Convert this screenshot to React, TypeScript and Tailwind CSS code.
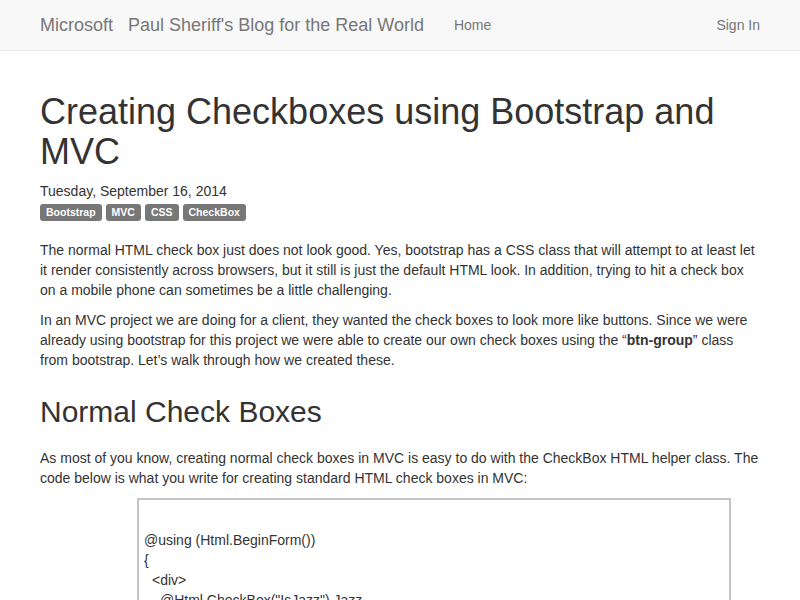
export default function App() {
  const tags = ['Bootstrap', 'MVC', 'CSS', 'CheckBox'];

  return (
    <div className="min-h-screen bg-white text-[14px] leading-[20px] text-[#333]" style={{ fontFamily: '"Liberation Sans", Arial, sans-serif' }}>
      {/* Navbar */}
      <nav className="h-[51px] border-b border-[#e7e7e7] bg-[#f8f8f8]">
        <div className="mx-auto flex h-[50px] w-[750px] items-center px-[15px]">
          <a className="text-[18px] leading-[20px] text-[#777]">Microsoft</a>
          <a className="ml-[15px] text-[18px] leading-[20px] text-[#777]">Paul Sheriff's Blog for the Real World</a>
          <a className="ml-[30px] text-[#777]">Home</a>
          <a className="ml-auto text-[#777]">Sign In</a>
        </div>
      </nav>

      <div className="mx-auto w-[750px] px-[15px] pt-[21px]">
        <h1 className="mt-[20px] mb-[10px] text-[36px] leading-[1.1] font-medium">
          Creating Checkboxes using Bootstrap and MVC
        </h1>
        <div>Tuesday, September 16, 2014</div>
        <div className="mt-[3px] flex gap-[4px]">
          {tags.map((t) => (
            <span
              key={t}
              className="flex h-[17px] items-center rounded-[3px] bg-[#777] px-[6px] pb-[1px] text-[10.5px] leading-none font-bold text-white"
            >
              {t}
            </span>
          ))}
        </div>

        <p className="mt-[19px] mb-[10px]">
          The normal HTML check box just does not look good. Yes, bootstrap has a CSS class that will attempt to at least let it
          render consistently across browsers, but it still is just the default HTML look. In addition, trying to hit a check box
          on a mobile phone can sometimes be a little challenging.
        </p>
        <p className="mb-[10px]">
          In an MVC project we are doing for a client, they wanted the check boxes to look more like buttons. Since we were
          already using bootstrap for this project we were able to create our own check boxes using the “<b>btn-group</b>” class
          from bootstrap. Let’s walk through how we created these.
        </p>

        <h2 className="mt-[25px] mb-[20px] text-[30px] leading-[1.1] font-medium">Normal Check Boxes</h2>

        <p className="mb-[10px]">
          As most of you know, creating normal check boxes in MVC is easy to do with the CheckBox HTML helper class. The code
          below is what you write for creating standard HTML check boxes in MVC:
        </p>

        <div className="ml-[97px] w-[594px] border-2 border-[#c4c4c4] px-[5px] pt-[10px] pb-[10px]">
          <div>&nbsp;</div>
          <div>@using (Html.BeginForm())</div>
          <div>{'{'}</div>
          <div className="pl-[8px]">&lt;div&gt;</div>
          <div className="pl-[16px]">@Html.CheckBox("IsJazz") Jazz</div>
          <div className="pl-[16px]">@Html.CheckBox("IsCountry") Country</div>
          <div className="pl-[16px]">@Html.CheckBox("IsRock") Rock</div>
          <div className="pl-[8px]">&lt;/div&gt;</div>
          <div>{'}'}</div>
        </div>
      </div>
    </div>
  );
}
